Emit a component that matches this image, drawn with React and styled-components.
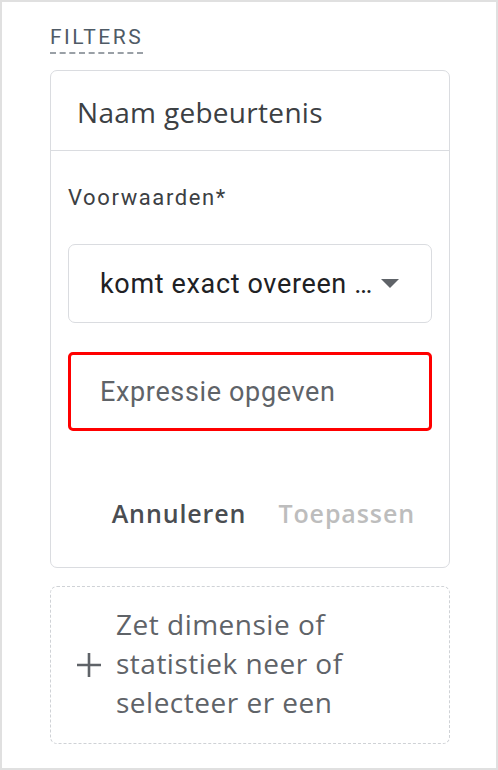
import React from "react";
import styled, { createGlobalStyle } from "styled-components";

const Global = createGlobalStyle`
  html, body {
    margin: 0;
    padding: 0;
    background: #ffffff;
  }
  * {
    box-sizing: border-box;
  }
`;

const Frame = styled.div`
  width: 498px;
  height: 770px;
  border: 2px solid #e0e0e0;
  padding: 22px 46px 0 48px;
  font-family: Roboto, "Liberation Sans", Arial, sans-serif;
  background: #fff;
`;

const SectionTitle = styled.div`
  display: inline-block;
  font-size: 21px;
  letter-spacing: 2.5px;
  color: #4f5b66;
  line-height: 26px;
  padding-bottom: 2px;
  border-bottom: 2px dashed #9aa0a6;
`;

const Card = styled.div`
  margin-top: 16px;
  width: 400px;
  border: 1px solid #dadce0;
  border-radius: 7px;
  background: #fff;
`;

const CardHeader = styled.div`
  height: 80px;
  display: flex;
  align-items: center;
  padding: 2px 0 0 26px;
  font-family: "Open Sans", Roboto, sans-serif;
  font-size: 28px;
  letter-spacing: 0.3px;
  color: #3c4043;
  border-bottom: 1px solid #dadce0;
`;

const CardBody = styled.div`
  padding: 0 17px;
`;

const Label = styled.div`
  height: 93px;
  display: flex;
  align-items: center;
  font-size: 22px;
  color: #3c4043;
  letter-spacing: 1.6px;
`;

const Select = styled.div`
  height: 79px;
  border: 1px solid #dadce0;
  border-radius: 7px;
  display: flex;
  align-items: center;
  padding: 0 32px 0 31px;
  font-size: 27px;
  color: #202124;
  letter-spacing: 0.65px;
`;

const SelectText = styled.span`
  flex: 1;
  white-space: nowrap;
`;

const Arrow = styled.span`
  width: 0;
  height: 0;
  border-left: 9px solid transparent;
  border-right: 9px solid transparent;
  border-top: 9px solid #5f6368;
`;

const Input = styled.div`
  margin-top: 29px;
  height: 79px;
  border: 3px solid #ff0000;
  border-radius: 5px;
  display: flex;
  align-items: center;
  padding-left: 29px;
  font-size: 27px;
  color: #5f6368;
  letter-spacing: 0.65px;
`;

const Actions = styled.div`
  height: 136px;
  display: flex;
  align-items: center;
  justify-content: flex-end;
  gap: 32px;
  padding: 28px 17px 0 0;
`;

const ActionButton = styled.span`
  font-family: "Open Sans", Roboto, sans-serif;
  font-size: 25px;
  font-weight: 600;
  letter-spacing: 0.9px;
  color: ${(p) => (p.disabled ? "#bdbdbd" : "#4a4d52")};
`;

const DropZone = styled.div`
  margin-top: 18px;
  width: 400px;
  height: 158px;
  border: 1px dashed #cfd2d6;
  border-radius: 7px;
  display: flex;
  align-items: center;
  padding-left: 24px;
  gap: 13px;
  color: #5f6368;
`;

const DropText = styled.div`
  font-family: "Open Sans", Roboto, sans-serif;
  font-size: 28px;
  line-height: 39px;
  letter-spacing: 0.5px;
  margin-top: -4px;
`;

const Plus = () => (
  <svg width="28" height="28" viewBox="0 0 28 28">
    <path d="M14 2v24M2 14h24" stroke="#5f6368" strokeWidth="2.6" fill="none" />
  </svg>
);

export default function App() {
  return (
    <>
      <Global />
      <Frame>
        <SectionTitle>FILTERS</SectionTitle>
        <Card>
          <CardHeader>Naam gebeurtenis</CardHeader>
          <CardBody>
            <Label>Voorwaarden*</Label>
            <Select>
              <SelectText>komt exact overeen …</SelectText>
              <Arrow />
            </Select>
            <Input>Expressie opgeven</Input>
            <Actions>
              <ActionButton>Annuleren</ActionButton>
              <ActionButton disabled>Toepassen</ActionButton>
            </Actions>
          </CardBody>
        </Card>
        <DropZone>
          <Plus />
          <DropText>
            Zet dimensie of
            <br />
            statistiek neer of
            <br />
            selecteer er een
          </DropText>
        </DropZone>
      </Frame>
    </>
  );
}
